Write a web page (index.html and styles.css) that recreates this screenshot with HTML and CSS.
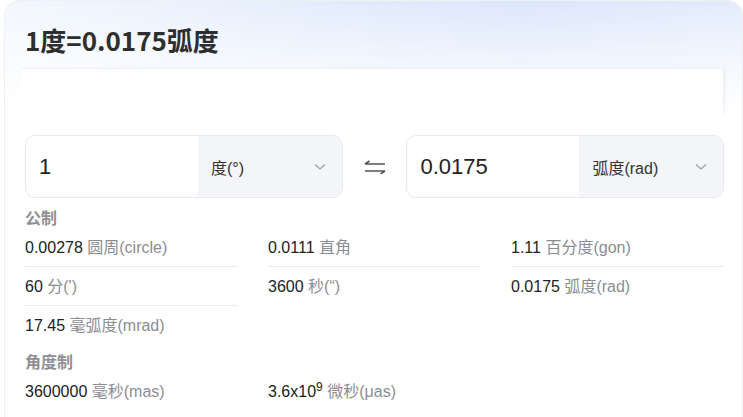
FILE: index.html
```html
<!DOCTYPE html>
<html lang="zh-CN">
<head>
    <meta charset="UTF-8">
    <meta name="viewport" content="width=device-width, initial-scale=1.0">
    <title>角度换算</title>
    <link rel="stylesheet" href="styles.css">
</head>
<body>
    <div class="card">
        <h1 class="title">1度=0.0175弧度</h1>

        <div class="panel"></div>

        <!-- Converter inputs -->
        <div class="converter">
            <div class="field">
                <div class="field-value">1</div>
                <div class="field-unit">
                    <span>度(°)</span>
                    <svg class="chevron" width="12" height="8" viewBox="0 0 12 8"><path d="M1 1.5 L6 6 L11 1.5" fill="none" stroke="#9aa0a8" stroke-width="1.3"/></svg>
                </div>
            </div>
            <div class="swap">
                <svg width="22" height="14" viewBox="0 0 22 14"><path d="M1 4 H21 M1 4 L5.5 1 M1 11 H21 M21 11 L16.5 14" fill="none" stroke="#555" stroke-width="1.6"/></svg>
            </div>
            <div class="field">
                <div class="field-value">0.0175</div>
                <div class="field-unit">
                    <span>弧度(rad)</span>
                    <svg class="chevron" width="12" height="8" viewBox="0 0 12 8"><path d="M1 1.5 L6 6 L11 1.5" fill="none" stroke="#9aa0a8" stroke-width="1.3"/></svg>
                </div>
            </div>
        </div>

        <!-- Metric units -->
        <div class="section section-first">
            <div class="section-title">公制</div>
            <div class="results">
                <div class="col">
                    <div class="row">0.00278 <span class="unit">圆周(circle)</span></div>
                    <div class="row">60 <span class="unit">分(')</span></div>
                    <div class="row">17.45 <span class="unit">毫弧度(mrad)</span></div>
                </div>
                <div class="col">
                    <div class="row">0.0111 <span class="unit">直角</span></div>
                    <div class="row">3600 <span class="unit">秒(“)</span></div>
                </div>
                <div class="col">
                    <div class="row">1.11 <span class="unit">百分度(gon)</span></div>
                    <div class="row">0.0175 <span class="unit">弧度(rad)</span></div>
                </div>
            </div>
        </div>

        <!-- Angle units -->
        <div class="section">
            <div class="section-title">角度制</div>
            <div class="results">
                <div class="col">
                    <div class="row">3600000 <span class="unit">毫秒(mas)</span></div>
                </div>
                <div class="col">
                    <div class="row">3.6x10<sup>9</sup> <span class="unit">微秒(μas)</span></div>
                </div>
                <div class="col"></div>
            </div>
        </div>
    </div>
</body>
</html>
```

FILE: styles.css
```css
body {
    margin: 0;
    font-family: 'Liberation Sans', 'Noto Sans CJK SC', sans-serif;
    background-color: #fff;
    color: #222;
}

.card {
    margin-left: 4px;
    min-height: 417px;
    box-sizing: border-box;
    padding: 0 18px 0 20px;
    border: 1px solid #eef0f3;
    border-bottom: none;
    border-radius: 16px 16px 0 0;
    background:
        linear-gradient(180deg, rgba(255, 255, 255, 0) 0, #fff 105px),
        linear-gradient(90deg, #f3f7fe 0, #e3ecfc 45%, #dce7fb 70%, #e4ecfc 100%);
}

.title {
    margin: 0;
    padding-top: 22px;
    font-family: 'Noto Sans CJK SC', sans-serif;
    font-size: 26px;
    line-height: 34px;
    font-weight: 700;
    color: #2e2e2e;
}

.panel {
    height: 45px;
    margin: 11px 1px 0 -3px;
    background: #fff;
    border-top: 1px solid #eef1f7;
    box-shadow: 3px 0 3px -1px rgba(180, 180, 210, 0.2);
}

.converter {
    display: flex;
    align-items: center;
    margin-top: 21px;
}

.field {
    display: flex;
    width: 318px;
    height: 63px;
    box-sizing: border-box;
    border: 1px solid #e7e9ec;
    border-radius: 10px;
    overflow: hidden;
    background: #fff;
}

.field-value {
    width: 172px;
    padding-left: 13px;
    box-sizing: border-box;
    font-size: 22px;
    line-height: 61px;
    color: #222;
}

.field-unit {
    flex: 1;
    display: flex;
    align-items: center;
    justify-content: space-between;
    padding: 0 16px 0 13px;
    background: #f4f5f8;
    font-size: 16px;
    color: #333;
}

.chevron {
    display: block;
}

.swap {
    width: 64px;
    display: flex;
    justify-content: center;
    align-items: center;
}

.section {
    margin-top: 10px;
}

.section-first {
    margin-top: 12px;
}

.section-title {
    font-size: 16px;
    font-weight: 700;
    line-height: 18px;
    color: #8d9096;
}

.results {
    display: grid;
    grid-template-columns: repeat(3, 1fr);
    column-gap: 30px;
}

.row {
    padding: 8px 0 6px;
    font-size: 16px;
    line-height: 24px;
    border-bottom: 1px solid #ebebeb;
}

.row:last-child {
    border-bottom: none;
}

.unit {
    color: #8a8d93;
}

.row sup {
    font-size: 12px;
    line-height: 0;
}
```
